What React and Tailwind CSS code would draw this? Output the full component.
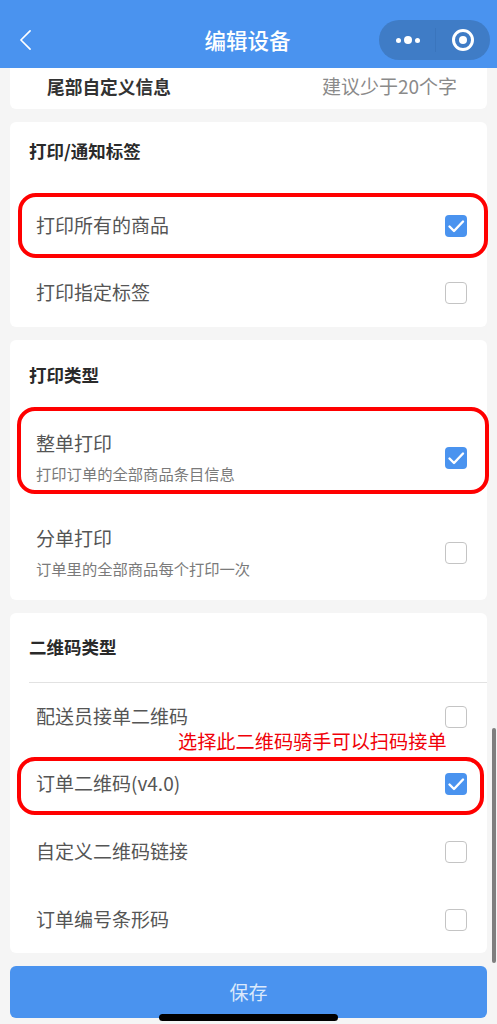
import React from "react";

const font = { fontFamily: '"Noto Sans CJK SC", "Noto Sans", sans-serif' };

function Checkbox({ checked }) {
  if (checked) {
    return (
      <div className="flex h-[22px] w-[22px] shrink-0 items-center justify-center rounded-[4px] bg-[#4a93ef]">
        <svg viewBox="0 0 22 22" className="h-[22px] w-[22px]" fill="none" stroke="#fff" strokeWidth="2.4" strokeLinecap="round" strokeLinejoin="round">
          <path d="M4.5 11.5 L9 16 L18 6.5" />
        </svg>
      </div>
    );
  }
  return <div className="h-[22px] w-[22px] shrink-0 rounded-[4px] border border-[#c4c4c4] bg-white" />;
}

function Row({ title, sub, checked, height, ring }) {
  return (
    <div className={`relative flex items-center justify-between pl-[26px] pr-[20px] ${height}`}>
      <div className="-mt-[2px]">
        <div className="text-[19px] leading-[26px] text-[#555555]">{title}</div>
        {sub && <div className="mt-[7px] text-[15.3px] leading-[20px] text-[#7a7a7a]">{sub}</div>}
      </div>
      <Checkbox checked={checked} />
      {ring && <div className={`pointer-events-none absolute rounded-[18px] border-[4px] border-[#ff0000] ${ring}`} />}
    </div>
  );
}

function Heading({ children, className }) {
  return (
    <div className={`flex h-[70px] items-center text-[17.5px] font-bold text-[#2a2a2a] ${className}`}>{children}</div>
  );
}

export default function App() {
  return (
    <div className="relative flex h-[1024px] w-[497px] flex-col overflow-hidden bg-[#f5f5f5]" style={font}>
      {/* top bar */}
      <div className="relative flex h-[68px] shrink-0 items-center justify-center bg-[#4a93ef] pr-[2px] pt-[13px]">
        <svg viewBox="0 0 14 24" className="absolute left-[19px] top-[29px] h-[22px] w-[13px]" fill="none" stroke="#fff" strokeWidth="1.8" strokeLinecap="round" strokeLinejoin="round">
          <path d="M12 2 L2 12 L12 22" />
        </svg>
        <div className="text-[21.5px] font-medium text-white">编辑设备</div>
        <div className="absolute left-[379px] top-[20px] flex h-[40px] w-[111px] items-center rounded-full bg-[#3f7cc6]">
          <div className="flex w-[56px] items-center justify-center gap-[3px] pl-[1px]">
            <span className="h-[5px] w-[5px] rounded-full bg-white" />
            <span className="h-[8px] w-[8px] rounded-full bg-white" />
            <span className="h-[5px] w-[5px] rounded-full bg-white" />
          </div>
          <div className="h-[24px] w-px bg-[#3a75bd]" />
          <div className="flex flex-1 items-center justify-center">
            <div className="flex h-[22px] w-[22px] items-center justify-center rounded-full border-[3px] border-white">
              <span className="h-[8px] w-[8px] rounded-full bg-white" />
            </div>
          </div>
        </div>
      </div>

      <div className="flex flex-col gap-[13px] px-[10px]">
        <div className="flex h-[41px] items-center justify-between rounded-b-[6px] bg-white pb-[4px] pl-[37px] pr-[30px]">
          <div className="text-[17.7px] font-bold text-[#333333]">尾部自定义信息</div>
          <div className="text-[19px] text-[#8a8a8a]">建议少于20个字</div>
        </div>

        <div className="rounded-[6px] bg-white">
          <Heading className="pb-[12px] pl-[19px]">打印/通知标签</Heading>
          <Row title="打印所有的商品" checked height="h-[67px]" ring="left-[8px] -right-[1px] top-[1px] h-[65px]" />
          <Row title="打印指定标签" height="h-[68px]" />
        </div>

        <div className="rounded-[6px] bg-white">
          <Heading className="pl-[19px]">打印类型</Heading>
          <Row title="整单打印" sub="打印订单的全部商品条目信息" checked height="h-[95px]" ring="left-[7px] -right-[2px] -top-[3px] h-[87px]" />
          <Row title="分单打印" sub="订单里的全部商品每个打印一次" height="h-[95px]" />
        </div>

        <div className="rounded-[6px] bg-white">
          <Heading className="ml-[19px] border-b border-[#e2e2e2]">二维码类型</Heading>
          <Row title="配送员接单二维码" height="h-[67px]" />
          <Row title="订单二维码(v4.0)" checked height="h-[68px]" ring="left-[7px] right-[3px] top-[7px] h-[58px]" />
          <Row title="自定义二维码链接" height="h-[68px]" />
          <Row title="订单编号条形码" height="h-[67px]" />
        </div>

        <div className="flex h-[52px] items-center justify-center rounded-[6px] bg-[#4a93ef] text-[19px] text-[#dbe9fb]">保存</div>
      </div>

      {/* annotation, scrollbar and home bar lie over the page */}
      <div className="absolute left-[178px] top-[728px] whitespace-nowrap text-[19.2px] leading-[26px] text-[#f00008]">选择此二维码骑手可以扫码接单</div>
      <div className="absolute left-[492px] top-[728px] h-[235px] w-[4px] rounded-full bg-[#7f7f7f]" />
      <div className="absolute left-[159px] top-[1014px] h-[7px] w-[179px] rounded-full bg-black" />
    </div>
  );
}
